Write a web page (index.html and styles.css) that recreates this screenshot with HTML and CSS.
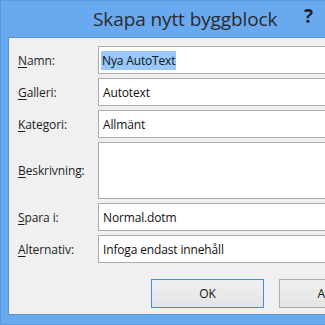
FILE: index.html
```html
<html>
<head>
<title>Skapa nytt byggblock</title>
<link rel="stylesheet" href="styles.css">
</head>
<body>
<div class="win">
  <div class="titlebar">
    <span class="title">Skapa nytt byggblock</span>
    <span class="help">?</span>
  </div>
  <div class="client">
    <form class="fields">
      <label><u>N</u>amn:</label>
      <div class="box"><span class="sel">Nya AutoText</span></div>

      <label><u>G</u>alleri:</label>
      <div class="box">Autotext</div>

      <label><u>K</u>ategori:</label>
      <div class="box">Allmänt</div>

      <label><u>B</u>eskrivning:</label>
      <div class="box tall"></div>

      <label><u>S</u>para i:</label>
      <div class="box">Normal.dotm</div>

      <label><u>A</u>lternativ:</label>
      <div class="box">Infoga endast innehåll</div>
    </form>
    <div class="buttons">
      <button class="btn default">OK</button>
      <button class="btn">Avbryt</button>
    </div>
  </div>
</div>
</body>
</html>
```

FILE: styles.css
```css
body {margin: 0; width: 325px; height: 325px; overflow: hidden; background: #69a9f0;}
.win {width: 420px; height: 323px; background: #69a9f0; border: 1px solid #5a97dd; border-right: none; font-family: "Open Sans", "Noto Sans", sans-serif;}
.titlebar {height: 36px; position: relative;}
.title {position: absolute; left: 92px; top: 5px; font-size: 19px; color: #2b2b2b; letter-spacing: -0.1px;}
.help {position: absolute; left: 303px; top: 2px; font-size: 19px; font-weight: bold; color: #222;}
.client {margin-left: 7px; height: 278px; background: #f0f0f0; border: 1px solid #5b93d3; border-right: none; box-sizing: border-box; padding: 8px 0 0 9px; font-size: 12px; color: #000;}
.fields {display: grid; grid-template-columns: 80px 1fr; row-gap: 4px; margin: 0;}
.fields label {display: flex; align-items: center; color: #1e1e1e; letter-spacing: -0.1px;}
.fields u {text-decoration-thickness: 1px; text-underline-offset: 2px;}
.box {height: 28px; box-sizing: border-box; border: 1px solid #ababab; background: #fff; padding: 0 4px; display: flex; align-items: center; color: #111; letter-spacing: -0.15px;}
.box.tall {height: 57px;}
.sel {background: #99c9fc; padding: 1px; margin-left: -2px;}
.buttons {display: flex; gap: 15px; margin: 16px 0 0 133px;}
.btn {width: 113px; height: 29px; font-family: "Open Sans", "Noto Sans", sans-serif; font-size: 12px; color: #111; border: 1px solid #adadad; background: linear-gradient(#efefef, #e5e5e5); padding: 0;}
.btn.default {border-color: #3c8fe7;}
```
